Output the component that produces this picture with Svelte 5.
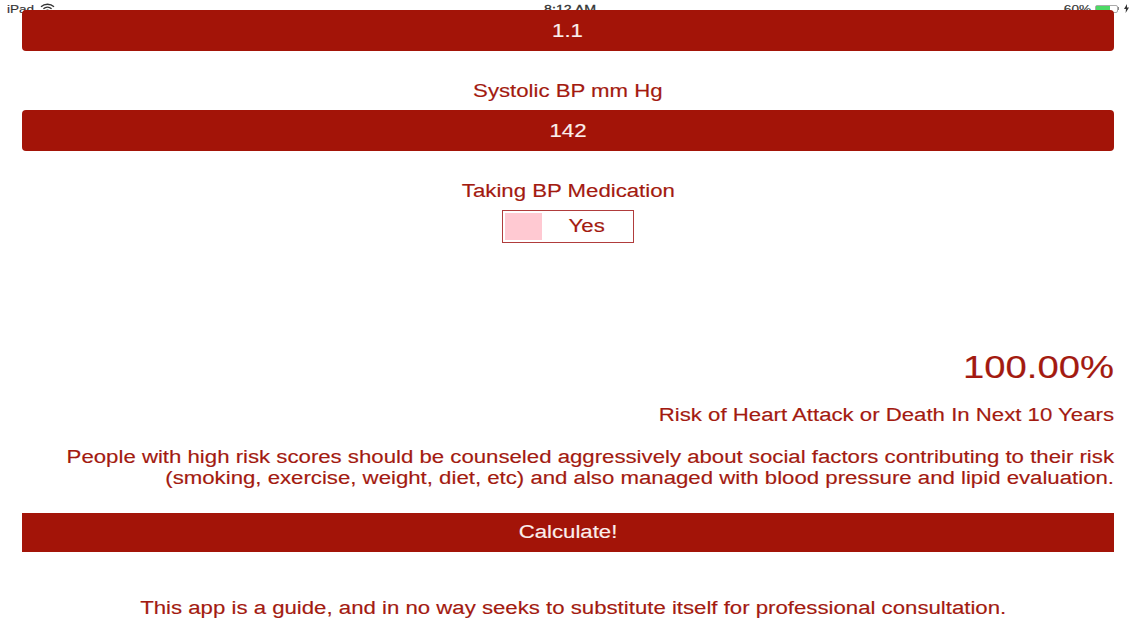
<script>
  const fields = [
    { label: 'Systolic BP mm Hg', value: '142' }
  ];
</script>

<div class="page">
  <div class="status">
    <div class="side">
      <span class="wide left-origin">iPad</span>
      <svg class="wifi" width="15" height="10" viewBox="0 0 15 10">
        <path d="M1 3.8 A9.5 9.5 0 0 1 14 3.8" fill="none" stroke="#333" stroke-width="1.3"/>
        <path d="M3.4 5.8 A6.2 6.2 0 0 1 11.6 5.8" fill="none" stroke="#333" stroke-width="1.3"/>
        <path d="M5.4 7.6 A3 3 0 0 1 9.6 7.6 L7.5 9.6 Z" fill="#333"/>
      </svg>
    </div>
    <span class="time wide">8:12 AM</span>
    <div class="side right">
      <span class="wide right-origin">60%</span>
      <span class="battery"><span class="charge"></span></span>
      <span class="nub"></span>
      <svg class="bolt" width="5" height="9" viewBox="0 0 5 9"><path d="M3 0 L0 5 H2 L1.6 9 L5 3.6 H3 Z" fill="#333"/></svg>
    </div>
  </div>

  <button class="bar first"><span class="wide">1.1</span></button>

  {#each fields as f}
    <div class="label"><span class="wide">{f.label}</span></div>
    <button class="bar"><span class="wide">{f.value}</span></button>
  {/each}

  <div class="label"><span class="wide">Taking BP Medication</span></div>
  <div class="toggle">
    <span class="knob"></span>
    <span class="toggle-text"><span class="wide">Yes</span></span>
  </div>

  <div class="score stretch-right">100.00%</div>
  <div class="risk stretch-right">Risk of Heart Attack or Death In Next 10 Years</div>
  <p class="advice stretch-right">People with high risk scores should be counseled aggressively about social factors contributing to their risk<br />(smoking, exercise, weight, diet, etc) and also managed with blood pressure and lipid evaluation.</p>

  <button class="calc"><span class="wide">Calculate!</span></button>

  <p class="foot"><span class="wide">This app is a guide, and in no way seeks to substitute itself for professional consultation.</span></p>
</div>

<style>
  :global(body) {
    margin: 0;
    background: #fff;
  }
  .page {
    position: relative;
    width: 1136px;
    height: 639px;
    overflow: hidden;
    box-sizing: border-box;
    padding: 10px 22px 0;
    display: flex;
    flex-direction: column;
    font-family: "Liberation Sans", Arial, sans-serif;
    color: #a31a10;
    font-size: 18px;
    -webkit-text-stroke: 0.15px currentColor;
  }
  .wide {
    display: inline-block;
    transform: scaleX(1.233);
    white-space: nowrap;
  }
  .left-origin {
    transform-origin: left center;
  }
  .right-origin {
    transform-origin: right center;
  }
  .stretch-right {
    transform: scaleX(1.233);
    transform-origin: right center;
  }
  .status {
    position: absolute;
    top: 3px;
    left: 7px;
    right: 7px;
    height: 12px;
    display: flex;
    justify-content: space-between;
    align-items: center;
    font-size: 11px;
    color: #333;
    line-height: 12px;
  }
  .side {
    display: flex;
    align-items: center;
    gap: 11px;
    width: 130px;
  }
  .wifi {
    margin-top: -3px;
  }
  .right {
    justify-content: flex-end;
    gap: 0;
  }
  .time {
    font-size: 11.5px;
    margin-left: 4px;
    -webkit-text-stroke: 0.3px #333;
  }
  .battery {
    width: 23px;
    height: 8px;
    margin-left: 4px;
    border: 1px solid #aaa;
    border-radius: 2px;
    box-sizing: border-box;
    display: block;
    background: #fff;
    margin-top: -1px;
  }
  .charge {
    display: block;
    width: 68%;
    height: 100%;
    background: #4cd964;
  }
  .nub {
    width: 1px;
    height: 3px;
    background: #888;
    margin-top: -1px;
  }
  .bolt {
    margin-left: 5px;
    margin-top: -1px;
  }
  .bar {
    display: block;
    width: 100%;
    height: 41px;
    flex: none;
    margin: 0;
    border: 0;
    border-radius: 4px;
    background: #a31408;
    color: #fbeeec;
    font: inherit;
    padding: 1px 0 0;
    position: relative;
  }
  .label {
    height: 59px;
    line-height: 21px;
    padding-top: 30px;
    box-sizing: border-box;
    text-align: center;
    flex: none;
  }
  .toggle {
    align-self: center;
    width: 132px;
    height: 33px;
    box-sizing: border-box;
    border: 1px solid #b03c3c;
    padding: 2px;
    display: flex;
    align-items: center;
    flex: none;
  }
  .knob {
    width: 37px;
    height: 27px;
    background: #ffc9d2;
  }
  .toggle-text {
    flex: 1;
    text-align: center;
  }
  .score {
    margin-top: 105px;
    text-align: right;
    font-size: 31px;
    line-height: 40px;
  }
  .risk {
    margin-top: 17px;
    text-align: right;
    line-height: 21px;
  }
  .advice {
    margin: 21px 0 0;
    text-align: right;
    line-height: 21px;
  }
  .calc {
    margin-top: 24px;
    height: 39px;
    flex: none;
    border: 0;
    padding: 0;
    background: #a31408;
    color: #fbeeec;
    font: inherit;
    position: relative;
  }
  .foot {
    margin: 46px 0 0;
    padding-left: 10px;
    text-align: center;
    line-height: 21px;
  }
</style>
